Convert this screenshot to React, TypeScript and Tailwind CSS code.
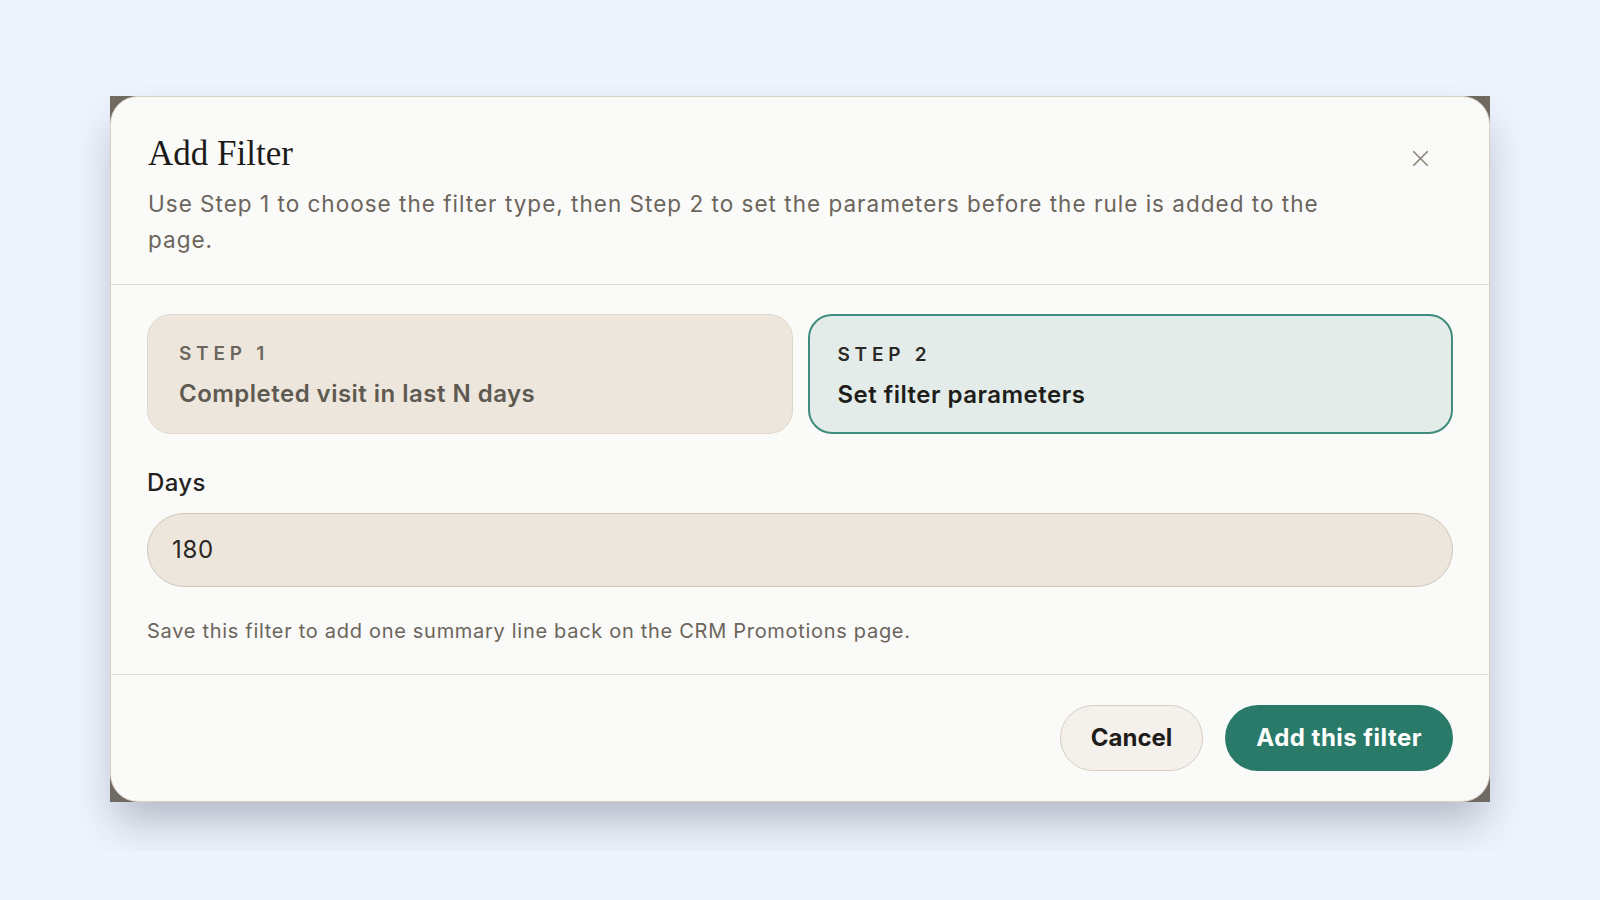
import { X } from 'lucide-react';

const sans = "font-['Inter','Liberation_Sans',sans-serif]";

function StepCard({ step, title, active }: { step: number; title: string; active?: boolean }) {
  return (
    <div
      className={[
        'flex flex-col rounded-[24px] pt-[27px] pb-[21px]',
        active
          ? 'border-2 border-[#3f8b7c] bg-[#e3ece9] px-[28px]'
          : 'border border-[#e0d8cb] bg-[#ede6dd] px-[31px]',
      ].join(' ')}
    >
      <div
        className={`text-[19px] leading-[24px] font-semibold tracking-[0.25em] ${
          active ? 'text-[#2b2926]' : 'text-[#6b665d]'
        }`}
      >
        STEP {step}
      </div>
      <div
        className={`mt-[12px] text-[24px] leading-[32px] font-semibold tracking-[0.02em] ${
          active ? 'text-[#1f1d1a]' : 'text-[#5f5a51]'
        }`}
      >
        {title}
      </div>
    </div>
  );
}

export default function App() {
  return (
    <div className={`w-full h-[900px] bg-[#eef3fc] pt-[84px] pl-[80px] ${sans}`}>
      <div className="w-[1440px] h-[767px] overflow-hidden pt-[12px] px-[30px]">
        <div className="w-[1380px] bg-[#6f6b63] shadow-[0_24px_40px_-6px_rgba(35,45,70,0.3)]">
          <div className="rounded-[28px] border border-[#d8d0c3] bg-[#fafaf8]">
            {/* header */}
            <div className="flex items-start justify-between pl-[37px] pr-[36px] pt-[36px] pb-[27px]">
              <div className="max-w-[1220px]">
                <h2 className="font-['Liberation_Serif','Times_New_Roman',serif] text-[35px] leading-[42px] text-[#1d1b18]">
                  Add Filter
                </h2>
                <p className="mt-[11px] text-[22.5px] leading-[35.5px] tracking-[0.045em] text-[#6b655c]">
                  Use Step 1 to choose the filter type, then Step 2 to set the parameters before the rule is added to the page.
                </p>
              </div>
              <button className="mt-[3px] mr-[11px] flex h-[44px] w-[44px] items-center justify-center text-[#8d877d]">
                <X size={27} strokeWidth={1.5} />
              </button>
            </div>

            <div className="h-px bg-[#e3dcd2]" />

            {/* body */}
            <div className="px-[36px] pt-[29px] pb-[28px]">
              <div className="grid grid-cols-2 gap-[15px]">
                <StepCard step={1} title="Completed visit in last N days" />
                <StepCard step={2} title="Set filter parameters" active />
              </div>

              <label className="mt-[33px] block text-[24px] leading-[32px] font-medium tracking-[0.015em] text-[#24221f]">
                Days
              </label>
              <div className="mt-[14px] flex h-[74px] items-center rounded-full border border-[#cfc6b8] bg-[#ede6dd] px-[24px] text-[24px] tracking-[0.03em] text-[#2a2724]">
                180
              </div>

              <p className="mt-[29px] text-[20px] leading-[30px] tracking-[0.035em] text-[#6b655c]">
                Save this filter to add one summary line back on the CRM Promotions page.
              </p>
            </div>

            <div className="h-px bg-[#e3dcd2]" />

            {/* footer */}
            <div className="flex justify-end gap-[22px] px-[36px] pt-[30px] pb-[30px]">
              <button className="h-[66px] rounded-full border border-[#d6cec1] bg-[#f4f1ec] px-[30px] text-[24px] font-bold text-[#1f1d1a]">
                Cancel
              </button>
              <button className="h-[66px] rounded-full bg-[#2a7a6a] px-[31px] text-[24px] font-bold tracking-[0.02em] text-white">
                Add this filter
              </button>
            </div>
          </div>
        </div>
      </div>
    </div>
  );
}
